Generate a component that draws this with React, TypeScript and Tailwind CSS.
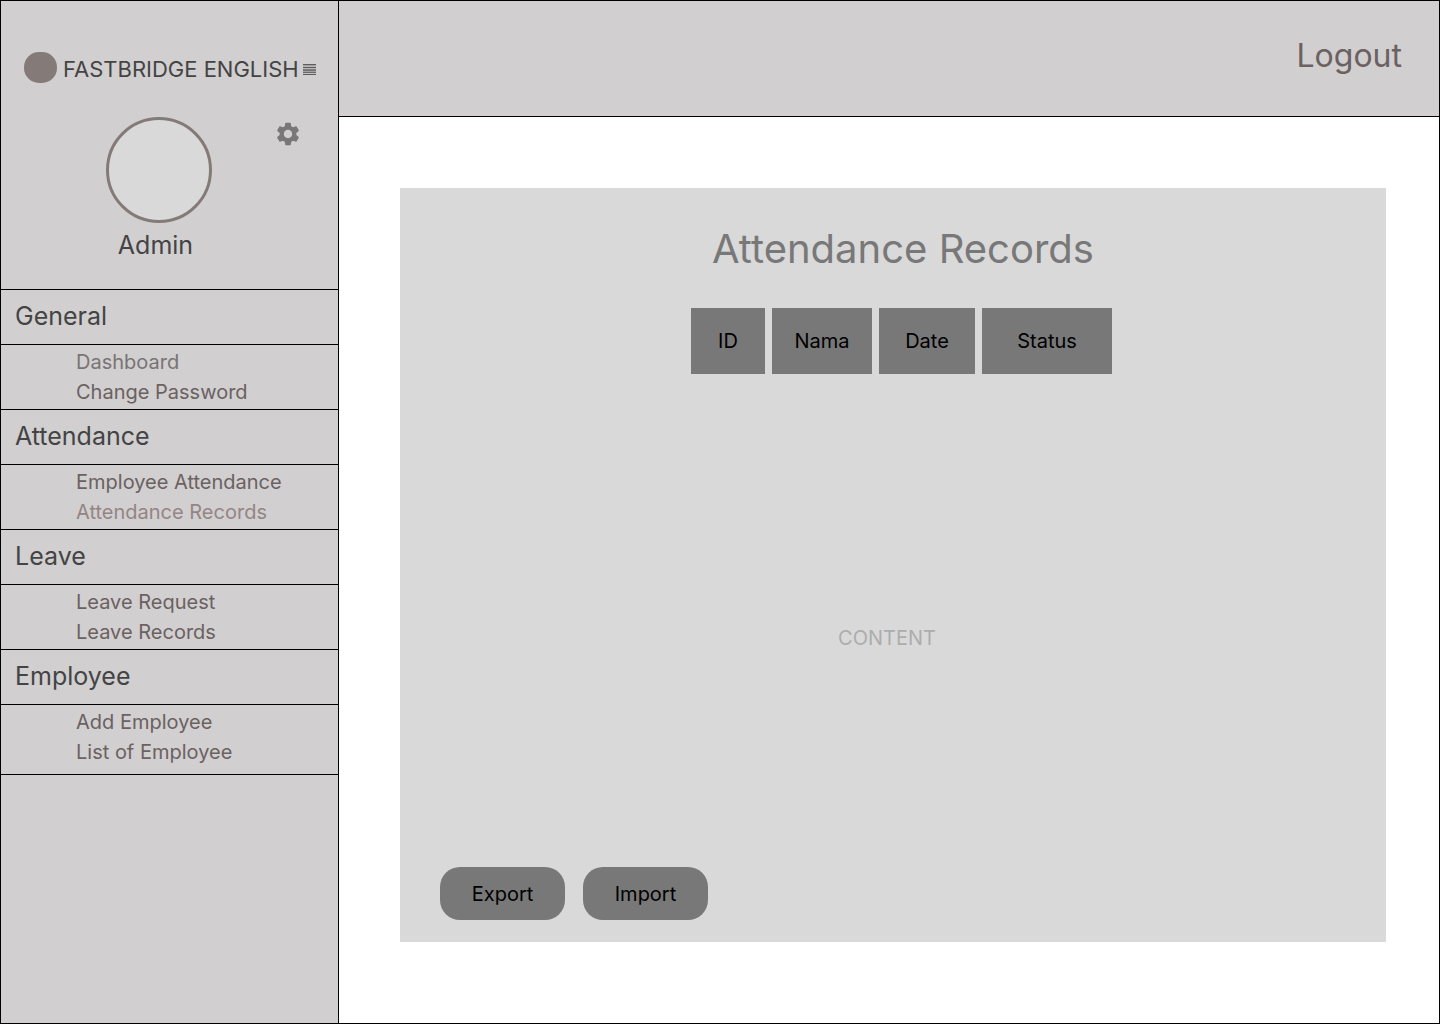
import { MdSettings } from "react-icons/md";

type NavItem = { label: string; tone?: "muted" | "active" };
type NavSection = { title: string; items: NavItem[] };

const sections: NavSection[] = [
  { title: "General", items: [{ label: "Dashboard", tone: "muted" }, { label: "Change Password" }] },
  { title: "Attendance", items: [{ label: "Employee Attendance" }, { label: "Attendance Records", tone: "active" }] },
  { title: "Leave", items: [{ label: "Leave Request" }, { label: "Leave Records" }] },
  { title: "Employee", items: [{ label: "Add Employee" }, { label: "List of Employee" }] },
];

const tones = {
  normal: "text-[#6b6161]",
  muted: "text-[#787474]",
  active: "text-[#948585]",
};

const columns = [
  { label: "ID", width: "w-[74px]" },
  { label: "Nama", width: "w-[100px]" },
  { label: "Date", width: "w-[96px]" },
  { label: "Status", width: "w-[130px]" },
];

function MenuIcon() {
  return (
    <svg width="13" height="12" viewBox="0 0 13 12" fill="#5f5c5c" aria-hidden="true">
      <rect y="1" width="13" height="1.4" />
      <rect y="3.8" width="13" height="1.4" />
      <rect y="6.3" width="13" height="1.5" />
      <rect y="8.6" width="13" height="1.3" />
      <rect y="10.9" width="13" height="1.1" />
    </svg>
  );
}

function Sidebar() {
  return (
    <aside className="w-[338px] shrink-0 border-r border-black bg-[#d1cfd0]">
      <div className="border-b border-black pt-[51px] pb-[29px]">
        <div className="flex items-start pl-[23px]">
          <span className="h-[31px] w-[33px] rounded-[15px] bg-[#847b79]" />
          <span className="ml-[6px] text-[22px] leading-[34px] whitespace-nowrap text-[#444]">FASTBRIDGE ENGLISH</span>
          <button type="button" aria-label="Menu" className="ml-1 flex h-[34px] items-center">
            <MenuIcon />
          </button>
        </div>
        <div className="mt-[31px] flex items-start pl-[105px]">
          <div className="flex flex-col items-center">
            <div className="size-[106px] rounded-full border-3 border-[#847b79] bg-[#d9d9d9]" />
            <p className="mt-[7px] pr-[7px] text-[25px] leading-[30px] text-[#444]">Admin</p>
          </div>
          <button type="button" aria-label="Settings" className="ml-[62px] pt-[3px]">
            <MdSettings className="size-7 text-[#787878]" />
          </button>
        </div>
      </div>
      <nav>
        {sections.map((section) => (
          <section key={section.title} className="group">
            <h2 className="border-b border-black pb-[2px] pl-[14px] text-[25px] leading-[52px] text-[#444]">{section.title}</h2>
            <ul className="border-b border-black py-[2px] pl-[75px] text-xl leading-[30px] group-last:pb-[7px]">
              {section.items.map((item) => (
                <li key={item.label}>
                  <a href="#" className={tones[item.tone ?? "normal"]}>
                    {item.label}
                  </a>
                </li>
              ))}
            </ul>
          </section>
        ))}
      </nav>
    </aside>
  );
}

export default function App() {
  return (
    <div className="flex min-h-screen border border-black bg-white font-['Inter',sans-serif]">
      <Sidebar />
      <div className="flex min-w-0 grow flex-col">
        <header className="flex h-[116px] justify-end border-b border-black bg-[#d1cfd0] pt-[35px] pr-[37px]">
          <a href="#" className="text-[32px] leading-10 text-[#6b6161]">
            Logout
          </a>
        </header>
        <main className="flex grow pt-[71px] pr-[53px] pb-[81px] pl-[61px]">
          <section className="flex grow flex-col bg-[#d9d9d9] px-10 pb-[22px]">
            <div className="flex flex-col items-center pl-5">
              <h1 className="mt-9 text-[40px] leading-[50px] text-[#787878]">Attendance Records</h1>
              <table className="mt-[27px] mr-[3px] table-fixed border-separate border-spacing-[7px] text-xl">
                <thead>
                  <tr>
                    {columns.map((column) => (
                      <th key={column.label} scope="col" className={`h-[66px] bg-[#787878] p-0 font-normal ${column.width}`}>
                        {column.label}
                      </th>
                    ))}
                  </tr>
                </thead>
              </table>
            </div>
            <div className="flex grow items-center justify-center pt-7 pr-3">
              <p className="text-xl text-[#adadad]">CONTENT</p>
            </div>
            <div className="flex gap-[18px]">
              <button type="button" className="h-[53px] w-[125px] rounded-[20px] bg-[#787878] text-xl">
                Export
              </button>
              <button type="button" className="h-[53px] w-[125px] rounded-[20px] bg-[#787878] text-xl">
                Import
              </button>
            </div>
          </section>
        </main>
      </div>
    </div>
  );
}
